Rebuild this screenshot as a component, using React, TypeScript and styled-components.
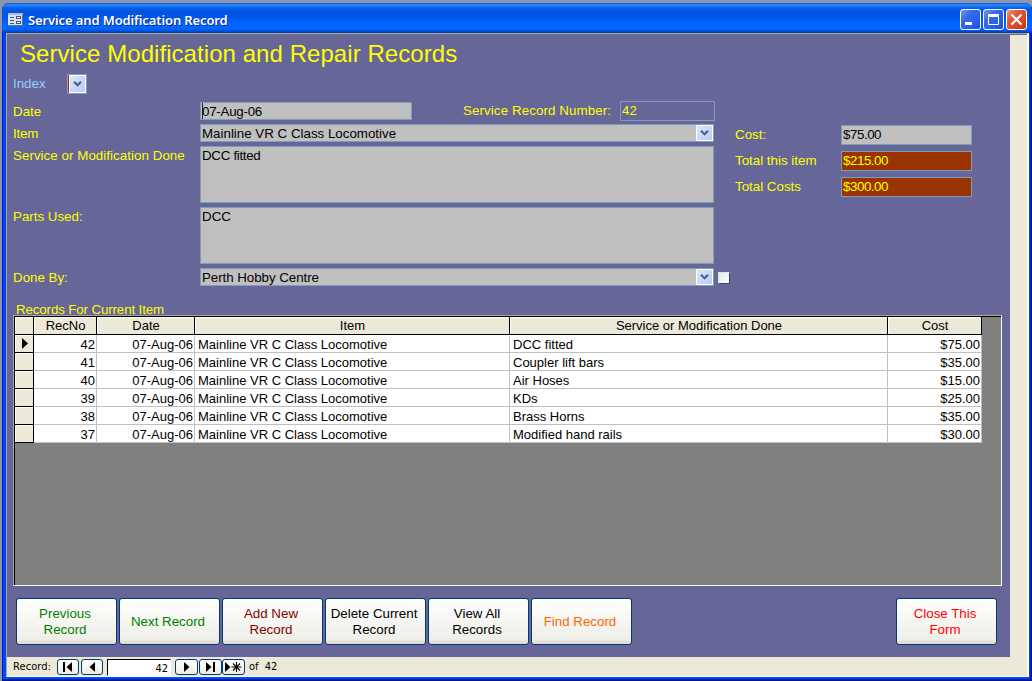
import React from "react";
import styled, { createGlobalStyle, css } from "styled-components";

const GlobalStyle = createGlobalStyle`
  * { box-sizing: border-box; }
  body { margin: 0; background: #8f95ad; overflow: hidden; }
  button, input { font: inherit; }
`;

const Desktop = styled.div`
  width: 1032px;
  height: 681px;
  padding: 3px 0 0 2px;
  background: #8f95ad;
  font-family: "Liberation Sans", Arial, sans-serif;
  font-size: 13.33px;
  line-height: 16px;
  white-space: nowrap;
`;

const Window = styled.div`
  display: flex;
  flex-direction: column;
  width: 1030px;
  height: 678px;
  padding: 0 3px 4px 4px;
  border-radius: 7px 7px 0 0;
  background: #0048f0;
  box-shadow: inset 1px 0 0 #0019cf, inset -1px -1px 0 #00138c, inset -2px -2px 0 #0023c4;
  overflow: hidden;
`;

const TitleBar = styled.header`
  display: flex;
  align-items: center;
  flex: none;
  height: 30px;
  margin: 0 -3px 0 -4px;
  padding: 2px 5px 0 6px;
  background: linear-gradient(#0a58d8 0, #2f8dff 2px, #1b78f5 3px, #0862ea 5px, #0054e3 8px, #0055e9 14px, #0163fb 20px, #0268ff 25px, #005df0 27px, #0041cf 29px, #0037b8 30px);
`;

const TitleText = styled.h1`
  flex: 1;
  margin: 2px 0 0 5px;
  font: 600 13px/18px "Noto Sans", "Open Sans", sans-serif;
  letter-spacing: -0.12px;
  color: #fff;
  text-shadow: 1px 1px 0 #0a2d8c;
`;

const CaptionButtons = styled.div`
  display: flex;
  gap: 2px;
  padding-top: 1px;
`;

const CaptionButton = styled.button<{ $close?: boolean }>`
  display: flex;
  width: 21px;
  height: 21px;
  padding: 0;
  border: 1px solid #fff;
  border-radius: 3px;
  background: ${(p) =>
    p.$close
      ? "linear-gradient(135deg, #ee9478 0, #e2593a 35%, #d8431c 75%, #c03a12 100%)"
      : "linear-gradient(135deg, #7399f5 0, #3768e8 35%, #2360ee 70%, #1a4fcf 100%)"};
`;

const Client = styled.main`
  flex: 1;
  display: flex;
  flex-direction: column;
  border: solid;
  border-width: 1px 2px 1px 1px;
  border-color: #aca899 #fff #fff #aca899;
  background: #ece9d8;
  box-shadow: inset 0 1px 0 #716f64;
  padding-top: 1px;
`;

const Form = styled.section`
  width: 1003px;
  height: 622px;
  flex: none;
  padding: 5px 8px 12px 6px;
  background: #666699;
  color: #ffff00;
`;

const FormTitle = styled.h2`
  height: 28px;
  margin: 0 0 0 7px;
  font-size: 24px;
  font-weight: 400;
  line-height: 28px;
  letter-spacing: 0.06px;
`;

const IndexRow = styled.div`
  display: flex;
  height: 20px;
  margin-top: 6px;
  color: #99ccff;
`;

const IndexLabel = styled.span`
  width: 54px;
  padding-top: 2px;
`;

const IndexCombo = styled.span`
  display: flex;
  width: 20px;
  height: 20px;
  border: 1px solid #7f9db9;
  border-left-color: #8fa0b8;
  box-shadow: inset 1px 0 0 #993300;
  padding-left: 1px;
`;

const Details = styled.div`
  display: grid;
  grid-template-columns: 701px 1fr;
  column-gap: 21px;
  height: 184px;
  margin-top: 8px;
`;

const Fields = styled.div`
  display: flex;
  flex-direction: column;
  gap: 4px;
`;

const FieldRow = styled.div<{ $height?: number }>`
  display: flex;
  flex: none;
  height: ${(p) => p.$height ?? 18}px;
`;

const FieldLabel = styled.label<{ $spacing?: number }>`
  flex: none;
  width: 187px;
  padding-top: 2px;
  letter-spacing: ${(p) => p.$spacing ?? 0}px;
`;

const Field = styled.div<{ $tone?: "grey" | "rust" | "plain"; $width?: number }>`
  display: flex;
  flex: none;
  width: ${(p) => p.$width ?? 514}px;
  border: 1px solid #7f9db9;
  padding-left: 1px;
  background: ${(p) => ({ grey: "#c0c0c0", rust: "#993300", plain: "transparent" })[p.$tone ?? "grey"]};
  color: ${(p) => ((p.$tone ?? "grey") === "grey" ? "#000" : "#ffff00")};
`;

const Value = styled.span<{ $spacing?: number }>`
  flex: 1;
  padding-top: 1px;
  letter-spacing: ${(p) => p.$spacing ?? 0}px;
`;

const DateValue = styled(Value)`
  box-shadow: inset 1px 0 0 #222;
`;

const DropButton = styled.span`
  display: flex;
  align-items: center;
  justify-content: center;
  width: 17px;
  height: 16px;
  border: 1px solid #fff;
  background: linear-gradient(135deg, #dce6fd, #b5cbf8);
`;

const IndexDrop = styled(DropButton)`
  height: 18px;
`;

const NumberGroup = styled.div`
  display: flex;
  flex: none;
  height: 20px;
  margin: -1px 0 0 51px;
`;

const NumberLabel = styled.label`
  width: 157px;
  padding-top: 2px;
  letter-spacing: 0.1px;
`;

const Checkbox = styled.span`
  flex: none;
  width: 12px;
  height: 12px;
  margin: 4px -16px 0 4px;
  border: 1px solid #1c5180;
  border-top-color: #dce0e6;
  border-left-color: #dce0e6;
  background: linear-gradient(135deg, #e8e8e4, #fff);
`;

const Costs = styled.div`
  display: flex;
  flex-direction: column;
  gap: 6px;
  padding-top: 23px;
`;

const CostRow = styled.div`
  display: flex;
  height: 20px;
`;

const CostLabel = styled.label`
  width: 106px;
  padding-top: 2px;
`;

const SubformLabel = styled.div`
  height: 15px;
  padding: 2px 0 0 3px;
  margin-top: 14px;
  letter-spacing: -0.13px;
`;

const Sheet = styled.div`
  width: 989px;
  height: 271px;
  border: solid;
  border-width: 1px;
  border-color: #aca899 #fff #fff #aca899;
  background: #808080;
  box-shadow: inset 0 1px 0 #000, inset 1px 0 0 #000;
  padding-top: 1px;
  color: #000;
  font-size: 13px;
`;

const columns = css`
  display: grid;
  grid-template-columns: 20px 63px 98px 315px 378px 94px;
`;

const HeaderRow = styled.div`
  ${columns}
  height: 18px;
`;

const HeaderCell = styled.div`
  border: solid #000;
  border-width: 0 1px 1px 0;
  background: #ece9d8;
  box-shadow: inset 1px 1px 0 #fff;
  text-align: center;
  line-height: 17px;
  padding-left: 1px;
  &:first-child { border-left-width: 1px; }
`;

const DataRow = styled.div`
  ${columns}
  height: 18px;
`;

const Cell = styled.div<{ $right?: boolean }>`
  border: solid #c0c0c0;
  border-width: 0 1px 1px 0;
  padding: 2px 1px 0 3px;
  background: #fff;
  line-height: 15px;
  text-align: ${(p) => (p.$right ? "right" : "left")};
`;

const Selector = styled.div`
  display: flex;
  border: solid #000;
  border-width: 0 1px 1px 1px;
  background: #ece9d8;
  box-shadow: inset 1px 1px 0 #fff;
`;

const Actions = styled.div`
  display: flex;
  gap: 2px;
  margin: 12px 0 0 3px;
`;

const ActionButton = styled.button<{ $color: string; $last?: boolean }>`
  width: 101px;
  height: 47px;
  margin-left: ${(p) => (p.$last ? "262px" : "0")};
  padding: 0 3px 0 0;
  border: 1px solid #003c74;
  border-radius: 3px;
  background: linear-gradient(#fff, #f5f5f2 50%, #f0f0ea 88%, #dcd8ce);
  color: ${(p) => p.$color};
  line-height: 16px;
  white-space: pre-line;
  text-align: center;
`;

const Navigator = styled.footer`
  display: flex;
  align-items: flex-start;
  height: 19px;
  padding: 2px 0 0 6px;
  font: 11px/16px "DejaVu Sans Condensed", "DejaVu Sans", sans-serif;
  color: #000;
`;

const NavLabel = styled.span`
  width: 44px;
  letter-spacing: 0.1px;
`;

const NavButton = styled.button<{ $gap?: number }>`
  display: flex;
  width: ${(p) => (p.$gap === undefined ? 22 : 23)}px;
  height: 16px;
  margin-right: ${(p) => p.$gap ?? 2}px;
  padding: 0;
  border: 1px solid #003c74;
  border-radius: 3px;
  background: linear-gradient(#fff, #ecebe5);
`;

const NavInput = styled.span`
  width: 64px;
  height: 17px;
  margin: 0 4px 0 2px;
  padding: 1px 2px 0 0;
  border: 1px solid #fff;
  border-top-color: #000;
  border-left-color: #000;
  background: #fff;
  text-align: right;
  line-height: 15px;
`;

const NavTotal = styled.span`
  margin-left: 4px;
  word-spacing: 3px;
`;

const Chevron = () => (
  <svg width="9" height="8" viewBox="0 0 9 8">
    <path d="M1 1.8 4.5 5.3 8 1.8" fill="none" stroke="#4d6185" strokeWidth="2.2" />
  </svg>
);

const FormIcon = () => (
  <svg width="15" height="13" viewBox="0 0 15 13" shapeRendering="crispEdges">
    <rect width="15" height="13" fill="#d9e2f0" />
    <path d="M0 12.5h15M14.5 0v13" stroke="#5b6f97" />
    <rect width="15" height="2" fill="#a9bde6" />
    <path d="M2 4.5h4M2 7.5h4M2 10.5h4" stroke="#4a5470" />
    <path d="M8.5 3.5h4v2h-4zM8.5 8.5h4v2h-4z" fill="#fff" stroke="#4a5470" />
  </svg>
);

const navShapes = {
  first: "M5 2h2v10H5zM14 2v10L8.5 7z",
  prev: "M13 2v10L7.5 7z",
  next: "M8 2v10l5.5-5z",
  last: "M6 2v10l5.5-5zM13 2h2v10h-2z",
  fresh: "M2 2v10l5.5-5z",
};

const NavIcon = ({ kind }: { kind: keyof typeof navShapes }) => (
  <svg width="20" height="14" viewBox="0 0 20 14">
    <path d={navShapes[kind]} fill="#000" />
    {kind === "fresh" && (
      <path d="M13.5 2v10M8.5 7h10M10 3.5l7 7M17 3.5l-7 7" stroke="#000" strokeWidth="1.1" />
    )}
  </svg>
);

const records = [
  { no: 42, done: "DCC fitted", cost: "$75.00" },
  { no: 41, done: "Coupler lift bars", cost: "$35.00" },
  { no: 40, done: "Air Hoses", cost: "$15.00" },
  { no: 39, done: "KDs", cost: "$25.00" },
  { no: 38, done: "Brass Horns", cost: "$35.00" },
  { no: 37, done: "Modified hand rails", cost: "$30.00" },
];

const actions = [
  { text: "Previous\nRecord", color: "#008000" },
  { text: "Next Record", color: "#008000" },
  { text: "Add New\nRecord", color: "#800000" },
  { text: "Delete Current\nRecord", color: "#000000" },
  { text: "View All\nRecords", color: "#000000" },
  { text: "Find Record", color: "#ff6600" },
  { text: "Close This\nForm", color: "#ff0000" },
];

export default function App() {
  return (
    <Desktop>
      <GlobalStyle />
      <Window>
        <TitleBar>
          <FormIcon />
          <TitleText>Service and Modification Record</TitleText>
          <CaptionButtons>
            <CaptionButton aria-label="Minimize">
              <svg width="19" height="19"><rect x="4" y="12" width="7" height="3" fill="#fff" /></svg>
            </CaptionButton>
            <CaptionButton aria-label="Maximize">
              <svg width="19" height="19">
                <path d="M4.5 5v9.5h10V5" fill="none" stroke="#fff" />
                <rect x="4" y="4" width="11" height="3" fill="#fff" />
              </svg>
            </CaptionButton>
            <CaptionButton $close aria-label="Close">
              <svg width="19" height="19">
                <path d="M4.5 4.5l10 10M14.5 4.5l-10 10" stroke="#fff" strokeWidth="2.2" />
              </svg>
            </CaptionButton>
          </CaptionButtons>
        </TitleBar>
        <Client>
          <Form>
            <FormTitle>Service Modification and Repair Records</FormTitle>
            <IndexRow>
              <IndexLabel>Index</IndexLabel>
              <IndexCombo><IndexDrop><Chevron /></IndexDrop></IndexCombo>
            </IndexRow>
            <Details>
              <Fields>
                <FieldRow>
                  <FieldLabel>Date</FieldLabel>
                  <Field $width={212}><DateValue $spacing={-0.25}>07-Aug-06</DateValue></Field>
                  <NumberGroup>
                    <NumberLabel>Service Record Number:</NumberLabel>
                    <Field $tone="plain" $width={95}><Value>42</Value></Field>
                  </NumberGroup>
                </FieldRow>
                <FieldRow>
                  <FieldLabel $spacing={-0.2}>Item</FieldLabel>
                  <Field><Value>Mainline VR C Class Locomotive</Value><DropButton><Chevron /></DropButton></Field>
                </FieldRow>
                <FieldRow $height={57}>
                  <FieldLabel $spacing={0.05}>Service or Modification Done</FieldLabel>
                  <Field><Value $spacing={-0.3}>DCC fitted</Value></Field>
                </FieldRow>
                <FieldRow $height={57}>
                  <FieldLabel>Parts Used:</FieldLabel>
                  <Field><Value>DCC</Value></Field>
                </FieldRow>
                <FieldRow>
                  <FieldLabel>Done By:</FieldLabel>
                  <Field><Value $spacing={-0.05}>Perth Hobby Centre</Value><DropButton><Chevron /></DropButton></Field>
                  <Checkbox />
                </FieldRow>
              </Fields>
              <Costs>
                <CostRow><CostLabel>Cost:</CostLabel><Field $width={131}><Value $spacing={-0.45}>$75.00</Value></Field></CostRow>
                <CostRow><CostLabel>Total this item</CostLabel><Field $tone="rust" $width={131}><Value $spacing={-0.45}>$215.00</Value></Field></CostRow>
                <CostRow><CostLabel>Total Costs</CostLabel><Field $tone="rust" $width={131}><Value $spacing={-0.45}>$300.00</Value></Field></CostRow>
              </Costs>
            </Details>
            <SubformLabel>Records For Current Item</SubformLabel>
            <Sheet>
              <HeaderRow>
                <HeaderCell />
                {["RecNo", "Date", "Item", "Service or Modification Done", "Cost"].map((h) => (
                  <HeaderCell key={h}>{h}</HeaderCell>
                ))}
              </HeaderRow>
              {records.map((r, i) => (
                <DataRow key={r.no}>
                  <Selector>
                    {i === 0 && (
                      <svg width="17" height="17"><path d="M7 3v11l6-5.5z" fill="#000" /></svg>
                    )}
                  </Selector>
                  <Cell $right>{r.no}</Cell>
                  <Cell $right>07-Aug-06</Cell>
                  <Cell>Mainline VR C Class Locomotive</Cell>
                  <Cell>{r.done}</Cell>
                  <Cell $right>{r.cost}</Cell>
                </DataRow>
              ))}
            </Sheet>
            <Actions>
              {actions.map((a, i) => (
                <ActionButton key={a.text} $color={a.color} $last={i === actions.length - 1}>{a.text}</ActionButton>
              ))}
            </Actions>
          </Form>
          <Navigator>
            <NavLabel>Record:</NavLabel>
            <NavButton><NavIcon kind="first" /></NavButton>
            <NavButton><NavIcon kind="prev" /></NavButton>
            <NavInput>42</NavInput>
            <NavButton $gap={1}><NavIcon kind="next" /></NavButton>
            <NavButton $gap={0}><NavIcon kind="last" /></NavButton>
            <NavButton $gap={0}><NavIcon kind="fresh" /></NavButton>
            <NavTotal>of 42</NavTotal>
          </Navigator>
        </Client>
      </Window>
    </Desktop>
  );
}
